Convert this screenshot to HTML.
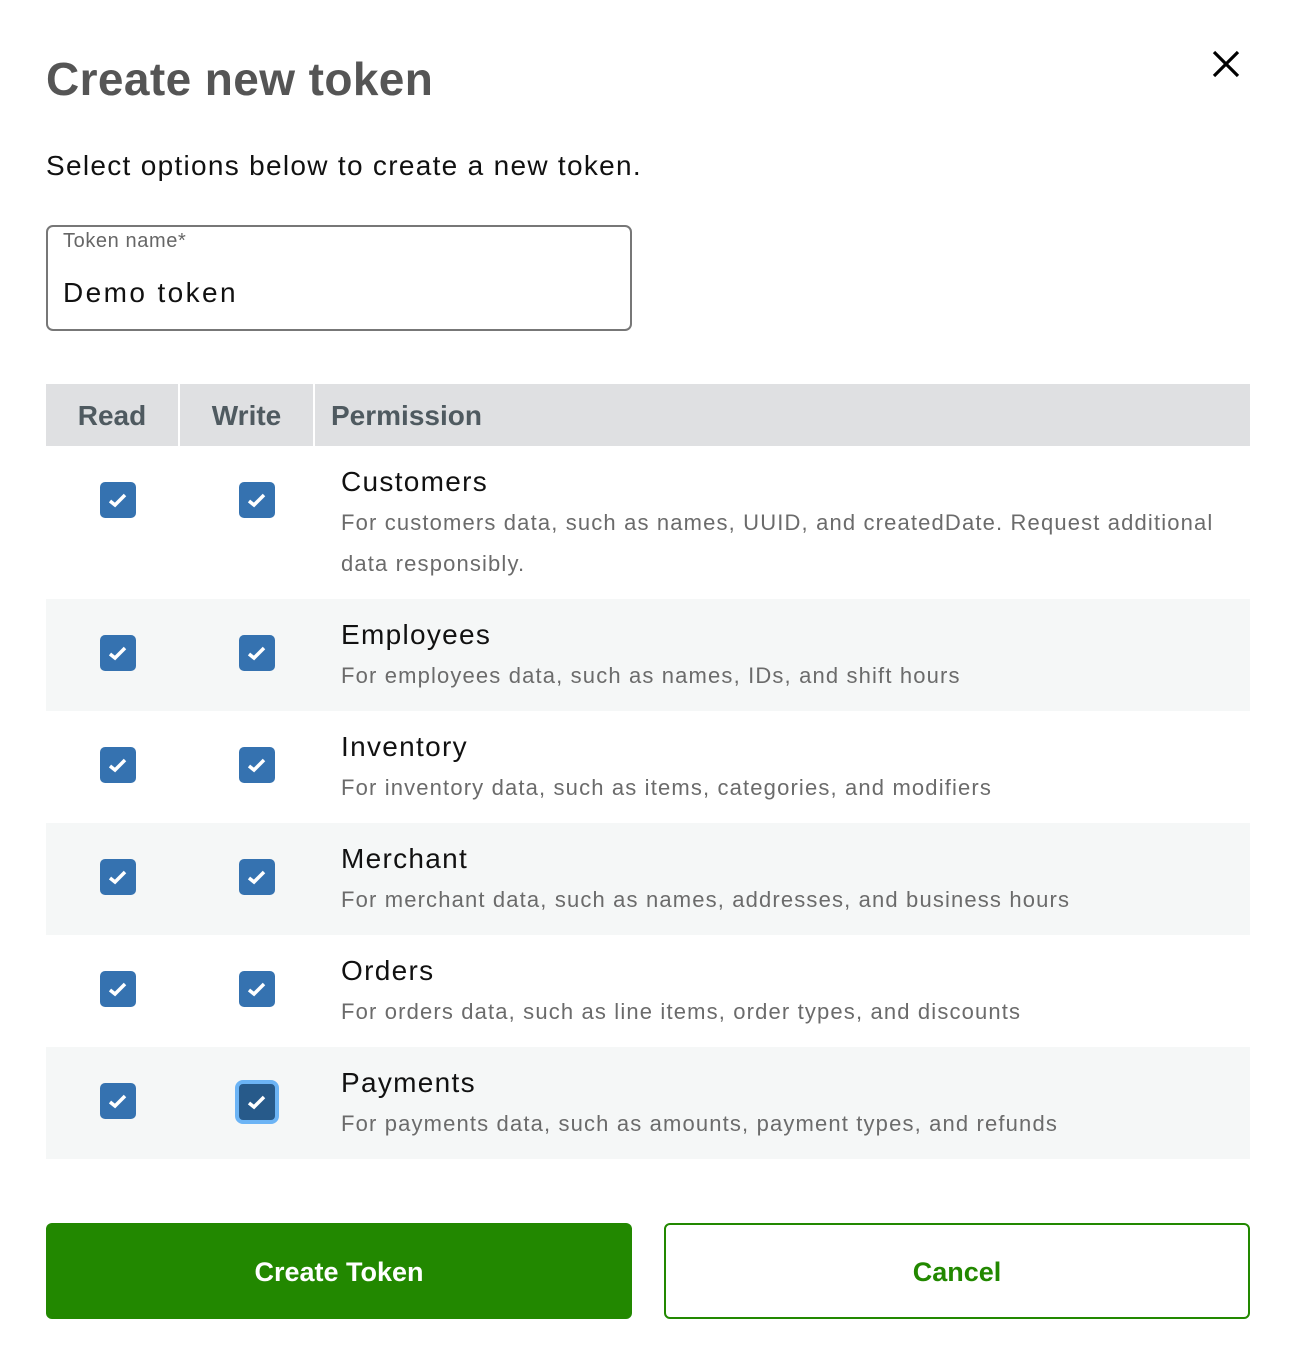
<!DOCTYPE html>
<html><head><meta charset="utf-8"><style>
*{margin:0;padding:0;box-sizing:border-box}
body{width:1290px;height:1362px;background:#fff;font-family:"Liberation Sans",sans-serif;position:relative;overflow:hidden}
.abs{position:absolute}
h1{position:absolute;left:46px;top:52px;font-size:46px;font-weight:bold;color:#555;letter-spacing:0.4px}
.sub{left:46px;top:150px;font-size:28px;color:#111;letter-spacing:1.3px}
.field{left:46px;top:225px;width:586px;height:106px;border:2px solid #777;border-radius:7px}
.field .lbl{position:absolute;left:15px;top:3px;font-size:20px;color:#666;letter-spacing:0.6px}
.field .val{position:absolute;left:15px;top:50px;font-size:28px;color:#111;letter-spacing:2.4px}
.hdr{top:384px;height:62px;background:#dfe0e2;color:#4f5a60;font-weight:bold;font-size:28px;line-height:64px}
.row{left:46px;width:1204px}
.row.alt{background:#f5f7f7}
.cb{position:absolute;width:36px;height:36px;background:#3572b0;border-radius:5px}
.cb svg{position:absolute;left:8px;top:9px}
.t{position:absolute;left:295px;font-size:28px;color:#111;letter-spacing:1.3px}
.d{position:absolute;left:295px;font-size:22px;color:#6b6b6b;line-height:41px;width:900px;letter-spacing:1.15px}
.btn{top:1223px;height:96px;border-radius:6px;font-size:27px;font-weight:bold;text-align:center;line-height:98px}
</style></head><body>
<h1>Create new token</h1>
<svg class="abs" style="left:1211px;top:49px" width="30" height="30" viewBox="0 0 30 30"><path d="M3 3L27 27M27 3L3 27" stroke="#000" stroke-width="3.2"/></svg>
<div class="abs sub">Select options below to create a new token.</div>
<div class="abs field"><div class="lbl">Token name*</div><div class="val">Demo token</div></div>

<div class="abs hdr" style="left:46px;width:132px;text-align:center">Read</div>
<div class="abs hdr" style="left:180px;width:133px;text-align:center">Write</div>
<div class="abs hdr" style="left:315px;width:935px;padding-left:16px">Permission</div>

<div class="abs row" style="top:446px;height:153px">
<div class="cb" style="left:54px;top:36px"><svg width="20" height="18" viewBox="0 0 20 18"><path d="M2 10L7 14L17 4" fill="none" stroke="#fff" stroke-width="3.5"/></svg></div>
<div class="cb" style="left:193px;top:36px"><svg width="20" height="18" viewBox="0 0 20 18"><path d="M2 10L7 14L17 4" fill="none" stroke="#fff" stroke-width="3.5"/></svg></div>
<div class="t" style="top:20px">Customers</div>
<div class="d" style="top:56px">For customers data, such as names, UUID, and createdDate. Request additional data responsibly.</div>
</div>

<div class="abs row alt" style="top:599px;height:112px">
<div class="cb" style="left:54px;top:36px"><svg width="20" height="18" viewBox="0 0 20 18"><path d="M2 10L7 14L17 4" fill="none" stroke="#fff" stroke-width="3.5"/></svg></div>
<div class="cb" style="left:193px;top:36px"><svg width="20" height="18" viewBox="0 0 20 18"><path d="M2 10L7 14L17 4" fill="none" stroke="#fff" stroke-width="3.5"/></svg></div>
<div class="t" style="top:20px">Employees</div>
<div class="d" style="top:56px">For employees data, such as names, IDs, and shift hours</div>
</div>

<div class="abs row" style="top:711px;height:112px">
<div class="cb" style="left:54px;top:36px"><svg width="20" height="18" viewBox="0 0 20 18"><path d="M2 10L7 14L17 4" fill="none" stroke="#fff" stroke-width="3.5"/></svg></div>
<div class="cb" style="left:193px;top:36px"><svg width="20" height="18" viewBox="0 0 20 18"><path d="M2 10L7 14L17 4" fill="none" stroke="#fff" stroke-width="3.5"/></svg></div>
<div class="t" style="top:20px">Inventory</div>
<div class="d" style="top:56px">For inventory data, such as items, categories, and modifiers</div>
</div>

<div class="abs row alt" style="top:823px;height:112px">
<div class="cb" style="left:54px;top:36px"><svg width="20" height="18" viewBox="0 0 20 18"><path d="M2 10L7 14L17 4" fill="none" stroke="#fff" stroke-width="3.5"/></svg></div>
<div class="cb" style="left:193px;top:36px"><svg width="20" height="18" viewBox="0 0 20 18"><path d="M2 10L7 14L17 4" fill="none" stroke="#fff" stroke-width="3.5"/></svg></div>
<div class="t" style="top:20px">Merchant</div>
<div class="d" style="top:56px">For merchant data, such as names, addresses, and business hours</div>
</div>

<div class="abs row" style="top:935px;height:112px">
<div class="cb" style="left:54px;top:36px"><svg width="20" height="18" viewBox="0 0 20 18"><path d="M2 10L7 14L17 4" fill="none" stroke="#fff" stroke-width="3.5"/></svg></div>
<div class="cb" style="left:193px;top:36px"><svg width="20" height="18" viewBox="0 0 20 18"><path d="M2 10L7 14L17 4" fill="none" stroke="#fff" stroke-width="3.5"/></svg></div>
<div class="t" style="top:20px">Orders</div>
<div class="d" style="top:56px">For orders data, such as line items, order types, and discounts</div>
</div>

<div class="abs row alt" style="top:1047px;height:112px">
<div class="cb" style="left:54px;top:36px"><svg width="20" height="18" viewBox="0 0 20 18"><path d="M2 10L7 14L17 4" fill="none" stroke="#fff" stroke-width="3.5"/></svg></div>
<div class="cb" style="left:189px;top:33px;width:44px;height:44px;background:#275a8a;border:4px solid #6cb4f5;border-radius:8px"><svg style="left:8px;top:9px" width="20" height="18" viewBox="0 0 20 18"><path d="M2 10L7 14L17 4" fill="none" stroke="#fff" stroke-width="3.5"/></svg></div>
<div class="t" style="top:20px">Payments</div>
<div class="d" style="top:56px">For payments data, such as amounts, payment types, and refunds</div>
</div>

<div class="abs btn" style="left:46px;width:586px;background:#228800;color:#fff">Create Token</div>
<div class="abs btn" style="left:664px;width:586px;border:2px solid #228800;color:#228800;line-height:94px">Cancel</div>
</body></html>
